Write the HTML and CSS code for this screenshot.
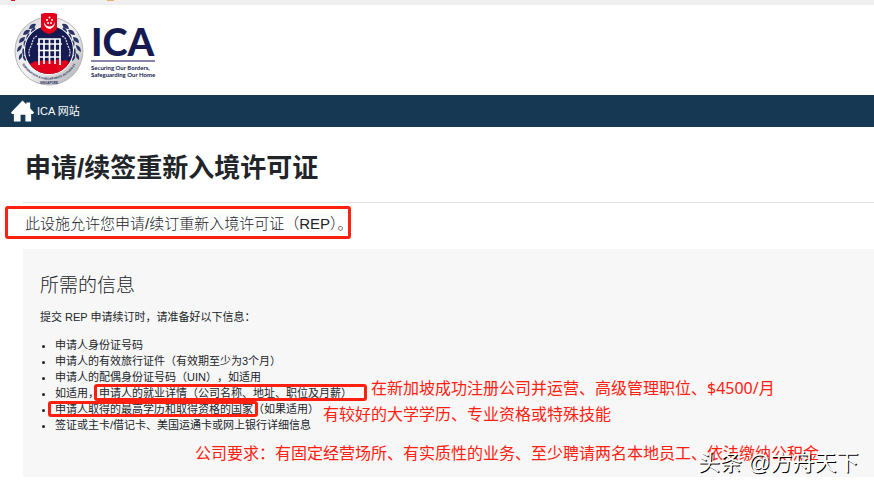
FILE: index.html
```
<!DOCTYPE html>
<html lang="zh-CN">
<head>
    <meta charset="UTF-8">
    <meta name="viewport" content="width=device-width, initial-scale=1.0">
    <title>申请/续签重新入境许可证</title>
    <link rel="stylesheet" href="styles.css">
</head>
<body>
    <div class="topo"><span class="marca"></span><span class="marca laranja"></span></div>

    <header class="cabecalho">
        <svg class="emblema" viewBox="0 0 72 74" aria-hidden="true">
            <defs>
                <linearGradient id="prata" x1="0" y1="0" x2="1" y2="1">
                    <stop offset="0" stop-color="#d5d5d8"/>
                    <stop offset=".5" stop-color="#f5f5f6"/>
                    <stop offset="1" stop-color="#a9a9ad"/>
                </linearGradient>
                <clipPath id="disco"><circle cx="35" cy="37" r="24"/></clipPath>
                <g id="louro" fill="#2b3467">
                    <path d="M22 11q-6-1-7 5 6 0 7-5zM16 17q-6-1-7 5 6 0 7-5zM11 24q-6 0-6 6 6-1 6-6zM8 32q-5 1-5 7 5-2 5-7zM8 40q-4 2-3 7 4-2 3-7z"/>
                    <path d="M21 14q2 5-4 7-1-5 4-7zM15 20q3 5-2 8-2-5 2-8zM11 27q4 4 0 8-3-4 0-8zM9 35q4 3 1 8-3-3-1-8zM9 42q4 2 3 6-4-2-3-6z"/>
                </g>
            </defs>
            <circle cx="35" cy="38" r="34" fill="url(#prata)" stroke="#b5b5b9"/>
            <use href="#louro"/>
            <use href="#louro" transform="matrix(-1 0 0 1 70 0)"/>
            <circle cx="35" cy="37" r="25" fill="#fff"/>
            <circle cx="35" cy="37" r="24" fill="#151b50"/>
            <g clip-path="url(#disco)">
                <path d="M10 54l4-3 4-1 3-2 4 1 3-2 4 1 4-1 4 1 4-2 4 2 4-1 4 3 4 0 4 3v12H10z" fill="#e0001b"/>
            </g>
            <g fill="none" stroke="#fff" stroke-width="1.700">
                <path d="M25 52V26h21v26M30 26v25M35.500 26v25M41 26v25M23 31h25M24 37.500h23M24 44h23"/>
            </g>
            <g fill="none" stroke="#cfd1df" stroke-width="1.300" stroke-dasharray="2 1">
                <path d="M23 23c-5 2-4 6-6 10s-3 6-1 11"/>
                <path d="M48 23c5 2 4 6 6 10s3 6 1 11"/>
            </g>
            <path d="M27 1q8-3 16 0v15q-3 4-8 5-5-1-8-5z" fill="#e2001d"/>
            <path d="M30 9c0 9 11 9 11 0-2 6-9 6-11 0z" fill="#fff"/>
            <g fill="#fff"><circle cx="35.500" cy="4.500" r="1"/><circle cx="33" cy="7" r="1"/><circle cx="38" cy="7" r="1"/><circle cx="34" cy="10" r="1"/><circle cx="37" cy="10" r="1"/></g>
            <path id="arco" d="M7 49A31 31 0 0 0 63 49" fill="none"/>
            <text class="lema"><textPath href="#arco" startOffset="50%" text-anchor="middle">IMMIGRATION &amp; CHECKPOINTS AUTHORITY</textPath></text>
            <text class="lema" x="35" y="71" text-anchor="middle">SINGAPORE</text>
        </svg>
        <div class="marca-ica">
            <div class="nome">ICA</div>
            <div class="slogan">Securing Our Borders,<br>Safeguarding Our Home</div>
        </div>
    </header>

    <nav class="menu">
        <a href="#">
            <svg class="casa" viewBox="0 0 24 24" aria-hidden="true"><path d="M12 1l4 4V3h4v6l4 4.500-1 1.500h-2v8h-6v-7h-5v7H3v-8H1l-1-1.500z" fill="#fff"/></svg>
            ICA 网站
        </a>
    </nav>

    <main class="conteudo">
        <h1>申请/续签重新入境许可证</h1>
        <p class="intro">此设施允许您申请/续订重新入境许可证（REP）。</p>

        <section class="painel">
            <h2>所需的信息</h2>
            <p>提交 REP 申请续订时，请准备好以下信息：</p>
            <ul>
                <li>申请人身份证号码</li>
                <li>申请人的有效旅行证件（有效期至少为3个月）</li>
                <li>申请人的配偶身份证号码（UIN），如适用</li>
                <li>如适用，申请人的就业详情（公司名称、地址、职位及月薪）</li>
                <li>申请人取得的最高学历和取得资格的国家（如果适用）</li>
                <li>签证或主卡/借记卡、美国运通卡或网上银行详细信息</li>
            </ul>
        </section>
    </main>

    <!-- anotações por cima da página -->
    <div class="caixa caixa-intro"></div>
    <div class="caixa caixa-emprego"></div>
    <div class="caixa caixa-estudos"></div>
    <div class="nota nota-emprego">在新加坡成功注册公司并运营、高级管理职位、$4500/月</div>
    <div class="nota nota-estudos">有较好的大学学历、专业资格或特殊技能</div>
    <div class="nota nota-empresa">公司要求：有固定经营场所、有实质性的业务、至少聘请两名本地员工、依法缴纳公积金</div>
    <div class="autor">头条 @方舟天下</div>
</body>
</html>
```
FILE: styles.css
```
* {
    box-sizing: border-box;
}

body {
    margin: 0;
    position: relative;
    background-color: #fff;
    color: #212529;
    font-family: "Liberation Sans", "Noto Sans CJK SC", sans-serif;
    font-size: 11px;
    line-height: 16px;
}

.topo {
    display: flex;
    gap: 92px;
    height: 5px;
    padding-left: 11px;
    background-color: #efefef;
}

.marca {
    width: 4px;
    height: 1px;
    background-color: #e0101c;
}

.laranja {
    width: 7px;
    background-color: #e8b070;
}

.cabecalho {
    display: flex;
    gap: 5px;
    height: 90px;
    padding: 8px 14px;
}

.emblema {
    width: 72px;
    height: 74px;
}

.lema {
    fill: #242c5e;
    font-family: "Liberation Sans", sans-serif;
    font-size: 3px;
    font-weight: bold;
}

.marca-ica {
    padding-top: 10px;
    color: #151b50;
    font-family: Lato, sans-serif;
    font-weight: bold;
}

.nome {
    height: 39px;
    border-bottom: 2px solid #8685a8;
    font-size: 38px;
    font-weight: 900;
    line-height: 36px;
}

.slogan {
    padding-top: 2px;
    font-size: 6px;
    line-height: 7px;
    white-space: nowrap;
}

.menu {
    height: 32px;
    padding: 0 11px;
    background-color: #173852;
}

.menu a {
    display: flex;
    align-items: center;
    gap: 3px;
    height: 32px;
    color: #fff;
    text-decoration: none;
}

.casa {
    width: 23px;
    height: 24px;
}

.conteudo {
    padding-left: 23px;
}

h1 {
    margin: 0;
    padding: 23px 2px 15px;
    border-bottom: 1px solid #e3e3e3;
    font-size: 26px;
    line-height: 37px;
}

.intro {
    margin: 0;
    padding: 10px 2px 15px;
    font-size: 15px;
    font-weight: 300;
    line-height: 21px;
}

.painel {
    padding: 24px 17px 44px;
    background-color: #f7f7f7;
}

h2 {
    margin: 0 0 11px;
    font-size: 19px;
    font-weight: 300;
    line-height: 25px;
}

.painel p {
    margin: 0 0 12px;
}

.painel ul {
    margin: 0;
    padding-left: 15px;
    text-spacing-trim: space-all;
}

.caixa {
    position: absolute;
    border: 3px solid #ff2010;
    border-radius: 3px;
}

.caixa-intro {
    left: 5px;
    top: 206px;
    width: 346px;
    height: 33px;
}

.caixa-emprego {
    left: 94px;
    top: 384px;
    width: 273px;
    height: 17px;
}

.caixa-estudos {
    left: 48px;
    top: 401px;
    width: 210px;
    height: 16px;
}

.nota {
    position: absolute;
    color: #ff2010;
    font-family: "Noto Sans", "Noto Sans CJK SC", sans-serif;
    font-size: 16px;
    line-height: 22px;
    white-space: nowrap;
}

.nota-emprego {
    left: 371px;
    top: 377px;
}

.nota-estudos {
    left: 323px;
    top: 403px;
}

.nota-empresa {
    left: 195px;
    top: 442px;
}

.autor {
    position: absolute;
    left: 698px;
    top: 448px;
    color: #fff;
    font-size: 22px;
    line-height: 30px;
    text-shadow: 1px 1px 0 #000;
    white-space: nowrap;
}
```
